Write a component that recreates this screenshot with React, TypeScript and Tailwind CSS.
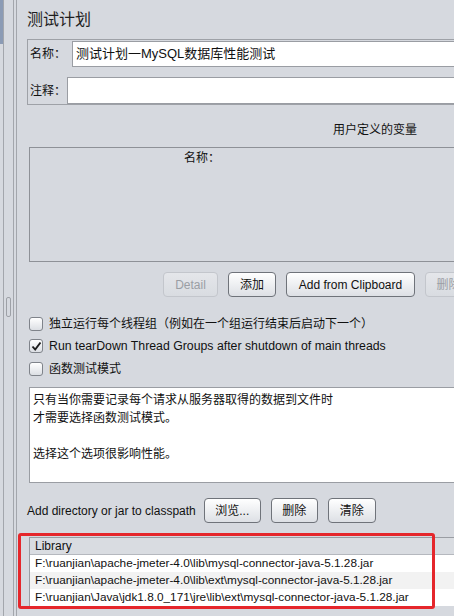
import React from 'react'

const font = "font-['Liberation_Sans','Noto_Sans_CJK_SC',sans-serif]"

const Btn = ({label, w, disabled}: {label: string; w: string; disabled?: boolean}) => (
  <div
    className={`${w} h-[25px] shrink-0 flex items-center justify-center rounded-[4px] border text-[12px] whitespace-nowrap bg-linear-to-b ${
      disabled
        ? 'border-[#c3c6cc] from-[#e4e6ea] to-[#d9dce1] text-[#9a9ea4]'
        : 'border-[#6f737a] from-white to-[#dde0e5] text-[#111]'
    }`}
  >
    {label}
  </div>
)

const Check = ({label, checked, h, size}: {label: string; checked?: boolean; h: string; size: string}) => (
  <div className={`${h} flex items-center`}>
    <div className="w-[14px] h-[14px] rounded-[3px] border border-[#7f838a] bg-linear-to-b from-white to-[#dcdfe4] flex items-center justify-center">
      {checked && (
        <svg width="11" height="11" viewBox="0 0 11 11">
          <path d="M1.5 5.5 L4.2 8.6 L9.5 1.5" fill="none" stroke="#1c1c1c" strokeWidth="1.9" />
        </svg>
      )}
    </div>
    <span className={`ml-[6px] ${size} text-[#111] whitespace-nowrap`}>{label}</span>
  </div>
)

export default function App() {
  return (
    <div className={`${font} relative w-[454px] h-[616px] bg-[#d6d9df] flex overflow-hidden`}>
      {/* splitter strip */}
      <div className="w-[17px] h-full shrink-0 flex">
        <div className="w-[3px] h-full flex flex-col">
          <div className="h-[44px] bg-[#8b9bb5]" />
        </div>
        <div className="w-[1px] h-full bg-[#a3a6ac]" />
        <div className="w-[9px] h-full flex flex-col items-center pt-[297px]">
          <div className="w-[5px] h-[20px] rounded-[2px] border border-[#9ea1a7]" />
        </div>
        <div className="w-[1px] h-full bg-[#a3a6ac]" />
        <div className="w-[2px] h-full" />
        <div className="w-[1px] h-full bg-[#a3a6ac]" />
      </div>

      {/* main panel */}
      <div className="w-[437px] shrink-0 flex flex-col">
        <div className="h-[39px] flex items-center pl-[10px] pt-[1px] text-[16px] text-[#1e1e1e]">测试计划</div>

        <div className="ml-[10px] h-[66px] border border-r-0 border-[#9ea1a7] flex flex-col pt-[1px]">
          <div className="h-[26px] flex items-center">
            <span className="w-[44px] pl-[2px] text-[12px] text-[#111]">名称：</span>
            <div className="flex-1 h-full bg-white border-t border-b border-l border-[#9a9da3] flex items-center pl-[3px] text-[13px] text-[#111]">
              测试计划一MySQL数据库性能测试
            </div>
          </div>
          <div className="h-[27px] mt-[10px] flex items-center">
            <span className="w-[39px] pl-[2px] text-[12px] text-[#111]">注释：</span>
            <div className="flex-1 h-full bg-white border-t border-b border-l border-[#9a9da3]" />
          </div>
        </div>

        <div className="ml-[12px] flex flex-col">
          <div className="h-[42px] flex items-center pt-[8px] pl-[304px] text-[12px] text-[#111] whitespace-nowrap">用户定义的变量</div>
          <div className="h-[115px] border border-r-0 border-[#8e9197] pl-[154px] pt-[1px] text-[12px] text-[#111]">名称：</div>

          <div className="mt-[10px] h-[25px] flex gap-[10px] pl-[134px]">
            <Btn label="Detail" w="w-[55px]" disabled />
            <Btn label="添加" w="w-[48px]" />
            <Btn label="Add from Clipboard" w="w-[129px]" />
            <Btn label="删除" w="w-[47px]" disabled />
          </div>

          <div className="mt-[16px] flex flex-col">
            <Check h="h-[22px]" size="text-[12px]" label="独立运行每个线程组（例如在一个组运行结束后启动下一个）" />
            <Check h="h-[22px]" size="text-[12.3px]" checked label="Run tearDown Thread Groups after shutdown of main threads" />
            <Check h="h-[24px]" size="text-[12px]" label="函数测试模式" />
          </div>

          <div className="mt-[6px] h-[96px] bg-white border border-r-0 border-[#9a9da3] pl-[3px] pt-[3px] text-[12px] leading-[18px] text-[#111]">
            <div>只有当你需要记录每个请求从服务器取得的数据到文件时</div>
            <div>才需要选择函数测试模式。</div>
            <div className="h-[18px]" />
            <div>选择这个选项很影响性能。</div>
          </div>
        </div>

        <div className="ml-[10px] mt-[15px] h-[25px] flex items-center">
          <span className="text-[12px] text-[#111] whitespace-nowrap">Add directory or jar to classpath</span>
          <div className="ml-[8px] flex gap-[10px]">
            <Btn label="浏览..." w="w-[57px]" />
            <Btn label="删除" w="w-[47px]" />
            <Btn label="清除" w="w-[48px]" />
          </div>
        </div>

        <div className="ml-[12px] mt-[14px] border-l border-t border-[#9a9da3] flex flex-col text-[11.8px] text-[#111]">
          <div className="h-[17px] flex items-center pl-[5px] border-b border-[#b5b8be] bg-[#d9dce1] text-[12px]">Library</div>
          <div className="h-[17px] flex items-center pl-[5px] bg-white whitespace-nowrap">F:\ruanjian\apache-jmeter-4.0\lib\mysql-connector-java-5.1.28.jar</div>
          <div className="h-[17px] flex items-center pl-[5px] bg-[#f2f2f2] whitespace-nowrap">F:\ruanjian\apache-jmeter-4.0\lib\ext\mysql-connector-java-5.1.28.jar</div>
          <div className="h-[17px] flex items-center pl-[5px] bg-white whitespace-nowrap">F:\ruanjian\Java\jdk1.8.0_171\jre\lib\ext\mysql-connector-java-5.1.28.jar</div>
        </div>
      </div>

      {/* annotation box */}
      <div className="absolute left-[18px] top-[533px] w-[417px] h-[76px] border-[3px] border-[#e5262b] rounded-[3px]" />
    </div>
  )
}
